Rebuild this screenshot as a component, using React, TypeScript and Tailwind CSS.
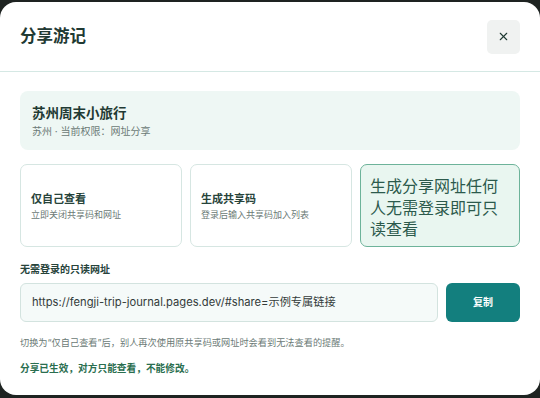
import { X } from "lucide-react";

const font = "font-['Inter','Noto_Sans_CJK_SC',sans-serif]";

function OptionCard({ title, desc }: { title: string; desc: string }) {
  return (
    <div className="flex flex-1 flex-col justify-center rounded-[7px] border border-[#d6e6e2] bg-white px-[10px]">
      <div className="text-[11px] font-bold leading-[16px] text-[#27433b]">{title}</div>
      <div className="mt-[2px] text-[9px] leading-[12px] text-[#6b7a76]">{desc}</div>
    </div>
  );
}

export default function App() {
  return (
    <div className={`${font} h-[398px] w-[540px] bg-[#1e2321] pt-[2px]`}>
      <div className="flex h-[393px] w-[540px] flex-col rounded-[16px] bg-white">
        <div className="flex h-[70px] items-center justify-between border-b border-[#d5e8e4] pl-[20px] pr-[20px]">
          <h2 className="text-[16.5px] font-bold text-[#1f3a33]">分享游记</h2>
          <button className="flex h-[34px] w-[33px] items-center justify-center rounded-[5px] bg-[#f0f2f1] text-[#1f3a33]">
            <X size={13} strokeWidth={2} />
          </button>
        </div>

        <div className="flex flex-col px-[20px] pt-[19px]">
          <div className="flex h-[59px] flex-col justify-center rounded-[8px] bg-[#eef7f4] px-[12px]">
            <div className="text-[13.5px] font-bold leading-[20px] text-[#1f3a33]">苏州周末小旅行</div>
            <div className="mt-[1px] text-[10px] leading-[14px] text-[#6b7a76]">苏州 · 当前权限：网址分享</div>
          </div>

          <div className="mt-[14px] flex h-[83px] gap-[8px]">
            <OptionCard title="仅自己查看" desc="立即关闭共享码和网址" />
            <OptionCard title="生成共享码" desc="登录后输入共享码加入列表" />
            <div className="flex-1 rounded-[7px] border border-[#6db39a] bg-[#e9f6f0] px-[9px] pt-[11px]">
              <div className="text-[16px] leading-[21.5px] text-[#2c5a4c]">生成分享网址任何人无需登录即可只读查看</div>
            </div>
          </div>

          <div className="mt-[15px] text-[10px] font-bold leading-[14px] text-[#27433b]">无需登录的只读网址</div>

          <div className="mt-[7px] flex h-[39px] gap-[8px]">
            <div className="flex flex-1 items-center rounded-[6px] border border-[#d3e3df] bg-[#f5faf9] px-[11px] text-[11.2px] text-[#333b39]">
              https://fengji-trip-journal.pages.dev/#share=示例专属链接
            </div>
            <button className="w-[74px] rounded-[6px] bg-[#137f7e] text-[10px] font-bold text-white">复制</button>
          </div>

          <div className="mt-[15px] text-[9.2px] leading-[12px] text-[#6b7a76]">
            切换为“仅自己查看”后，别人再次使用原共享码或网址时会看到无法查看的提醒。
          </div>

          <div className="mt-[13px] text-[9.7px] font-bold leading-[14px] text-[#2a6e4f]">
            分享已生效，对方只能查看，不能修改。
          </div>
        </div>
      </div>
    </div>
  );
}
